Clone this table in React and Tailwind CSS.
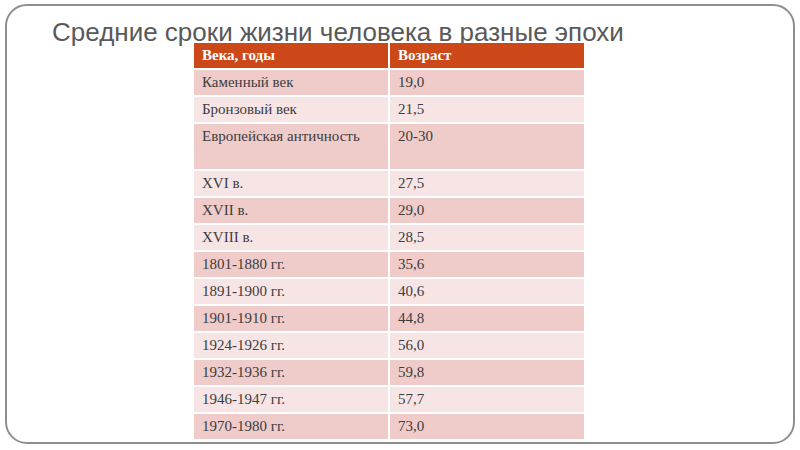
import React from 'react';

const rows = [
  ['Каменный век', '19,0'],
  ['Бронзовый век', '21,5'],
  ['Европейская античность', '20-30', true],
  ['XVI в.', '27,5'],
  ['XVII в.', '29,0'],
  ['XVIII в.', '28,5'],
  ['1801-1880 гг.', '35,6'],
  ['1891-1900 гг.', '40,6'],
  ['1901-1910 гг.', '44,8'],
  ['1924-1926 гг.', '56,0'],
  ['1932-1936 гг.', '59,8'],
  ['1946-1947 гг.', '57,7'],
  ['1970-1980 гг.', '73,0'],
];

const App = () => {
  return (
    <div className="w-[800px] h-[450px] bg-white pt-[4px] pl-[5px]">
      <div className="w-[790px] h-[440px] border-2 border-[#8f8f8f] rounded-[22px]">
        {/* Title */}
        <div
          className="h-[24px] mt-[13px] pl-[45px] text-[26px] leading-[26px] text-[#595959] whitespace-nowrap"
          style={{ fontFamily: '"Liberation Sans", Arial, sans-serif' }}
        >
          Средние сроки жизни человека в разные эпохи
        </div>

        {/* Table */}
        <div
          className="relative ml-[187px] w-[390px] grid grid-cols-2 gap-[2px] bg-white text-[15px] text-[#3d3d3d]"
          style={{ fontFamily: '"Liberation Serif", "Times New Roman", serif' }}
        >
          <div className="h-[25px] leading-[25px] px-[8px] bg-[#cc4819] text-white font-bold">Века, годы</div>
          <div className="h-[25px] leading-[25px] px-[8px] bg-[#cc4819] text-white font-bold">Возраст</div>
          {rows.map(([period, age, tall], i) => {
            const bg = i % 2 === 0 ? 'bg-[#efcbca]' : 'bg-[#f7e4e4]';
            const h = tall ? 'h-[45px]' : 'h-[25px]';
            return (
              <React.Fragment key={period}>
                <div className={`${h} ${bg} leading-[25px] px-[8px] whitespace-nowrap`}>{period}</div>
                <div className={`${h} ${bg} leading-[25px] px-[8px]`}>{age}</div>
              </React.Fragment>
            );
          })}
        </div>
      </div>
    </div>
  );
};

export default App;
